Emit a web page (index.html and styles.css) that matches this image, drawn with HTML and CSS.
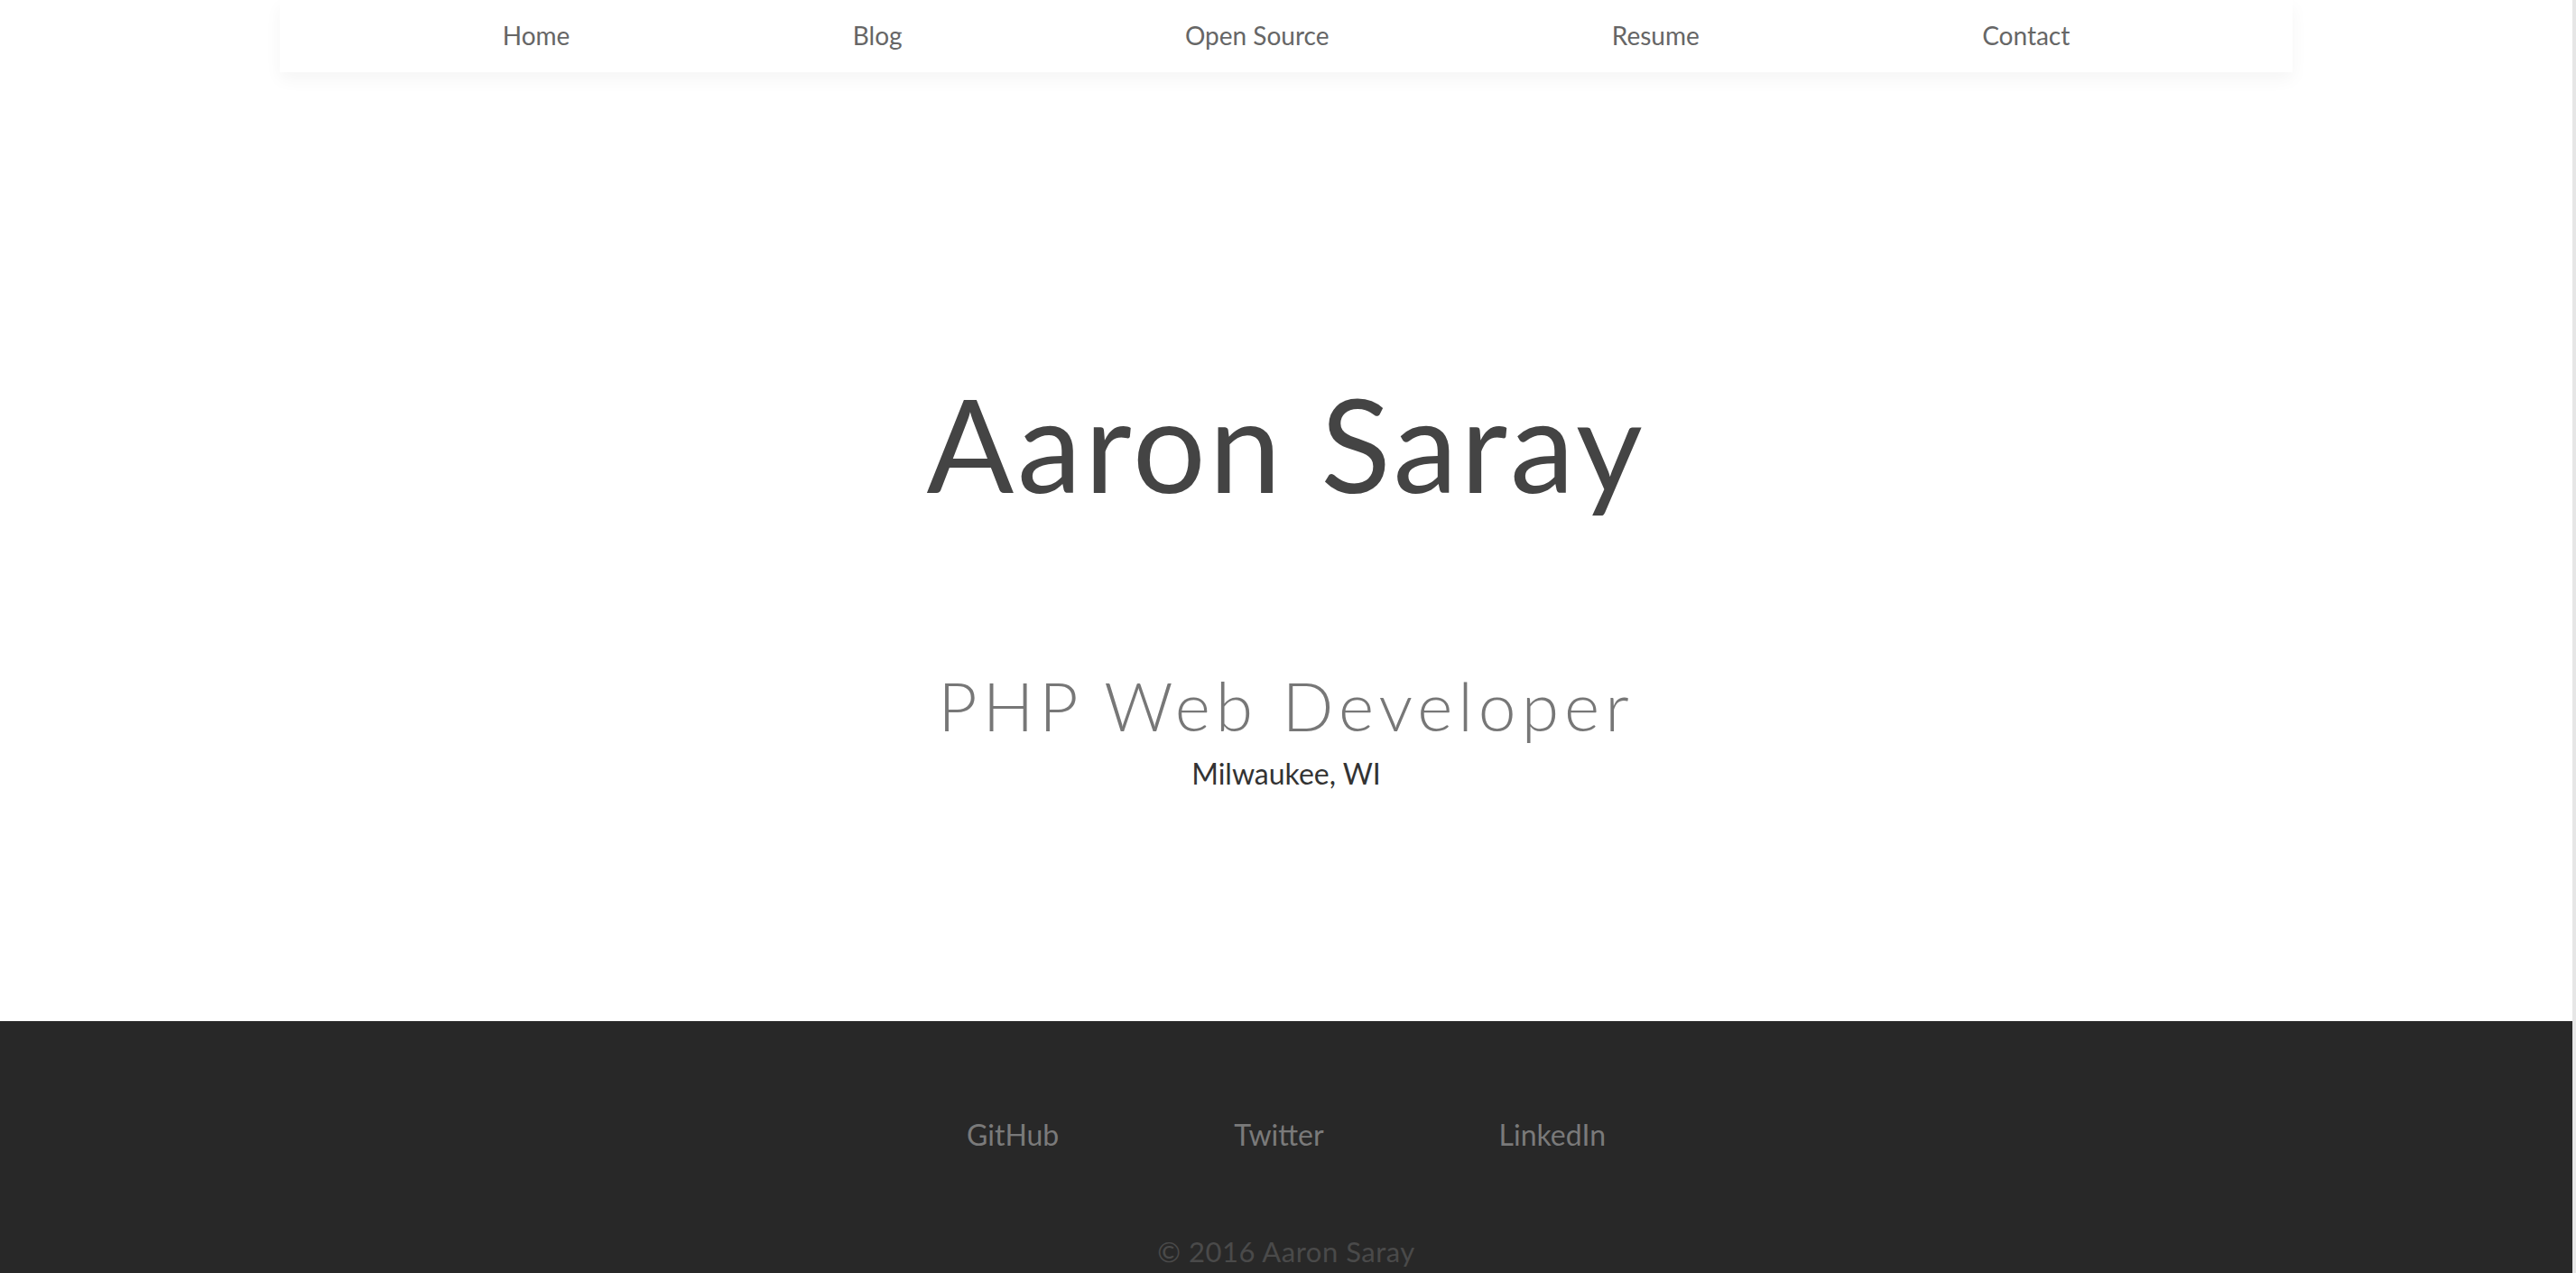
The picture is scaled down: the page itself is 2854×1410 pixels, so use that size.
FILE: index.html
```html
<!DOCTYPE html>
<html lang="en">
<head>
<meta charset="utf-8">
<title>Aaron Saray - PHP Web Developer</title>
<link rel="stylesheet" href="styles.css">
</head>
<body>
<div class="page">
  <nav class="topnav">
    <a href="#">Home</a>
    <a href="#">Blog</a>
    <a href="#">Open Source</a>
    <a href="#">Resume</a>
    <a href="#">Contact</a>
  </nav>
  <header class="hero">
    <h1 class="hero-name">Aaron Saray</h1>
    <h2 class="hero-title">PHP Web Developer</h2>
    <p class="hero-location">Milwaukee, WI</p>
  </header>
  <footer class="site-footer">
    <div class="social">
      <a href="#">GitHub</a>
      <a href="#">Twitter</a>
      <a href="#">LinkedIn</a>
    </div>
    <p class="copyright">© 2016 Aaron Saray</p>
  </footer>
</div>
</body>
</html>
```
FILE: styles.css
```css
html, body {
  margin: 0;
  padding: 0;
  background: #ffffff;
}
body {
  font-family: Lato, "Open Sans", "Liberation Sans", sans-serif;
  border-right: 4px solid #e6e6e6;
  overflow: hidden;
}
.page {
  display: flex;
  flex-direction: column;
}
a {
  text-decoration: none;
}
.topnav {
  width: 2230px;
  height: 80px;
  margin: 0 auto;
  padding: 0 90px;
  box-sizing: border-box;
  display: flex;
  justify-content: space-around;
  align-items: center;
  background: #fff;
  box-shadow: 0 8px 18px rgba(0, 0, 0, 0.045);
  position: relative;
  z-index: 1;
}
.topnav a {
  color: #666;
  font-size: 28px;
  line-height: 1;
  padding-bottom: 2px;
}
.hero {
  height: 1051px;
  box-sizing: border-box;
  padding-top: 339px;
  text-align: center;
}
.hero-name {
  margin: 0;
  font-size: 143px;
  line-height: 1;
  font-weight: 400;
  color: #444;
  letter-spacing: 3.7px;
}
.hero-title {
  margin: 182px 0 0;
  font-size: 75px;
  line-height: 1;
  font-weight: 300;
  color: #777;
  letter-spacing: 6px;
}
.hero-location {
  margin: 22px 0 0;
  font-size: 32px;
  line-height: 1;
  color: #333;
}
.site-footer {
  background: #282828;
  height: 400px;
  padding-top: 110px;
  box-sizing: border-box;
  text-align: center;
}
.social {
  display: flex;
  justify-content: center;
  gap: 194px;
}
.social a {
  color: #7a7a7a;
  font-size: 32px;
  line-height: 1;
}
.copyright {
  margin: 98px 0 0;
  font-size: 31px;
  line-height: 1;
  color: #4a4a4a;
  letter-spacing: 0.5px;
}
```
